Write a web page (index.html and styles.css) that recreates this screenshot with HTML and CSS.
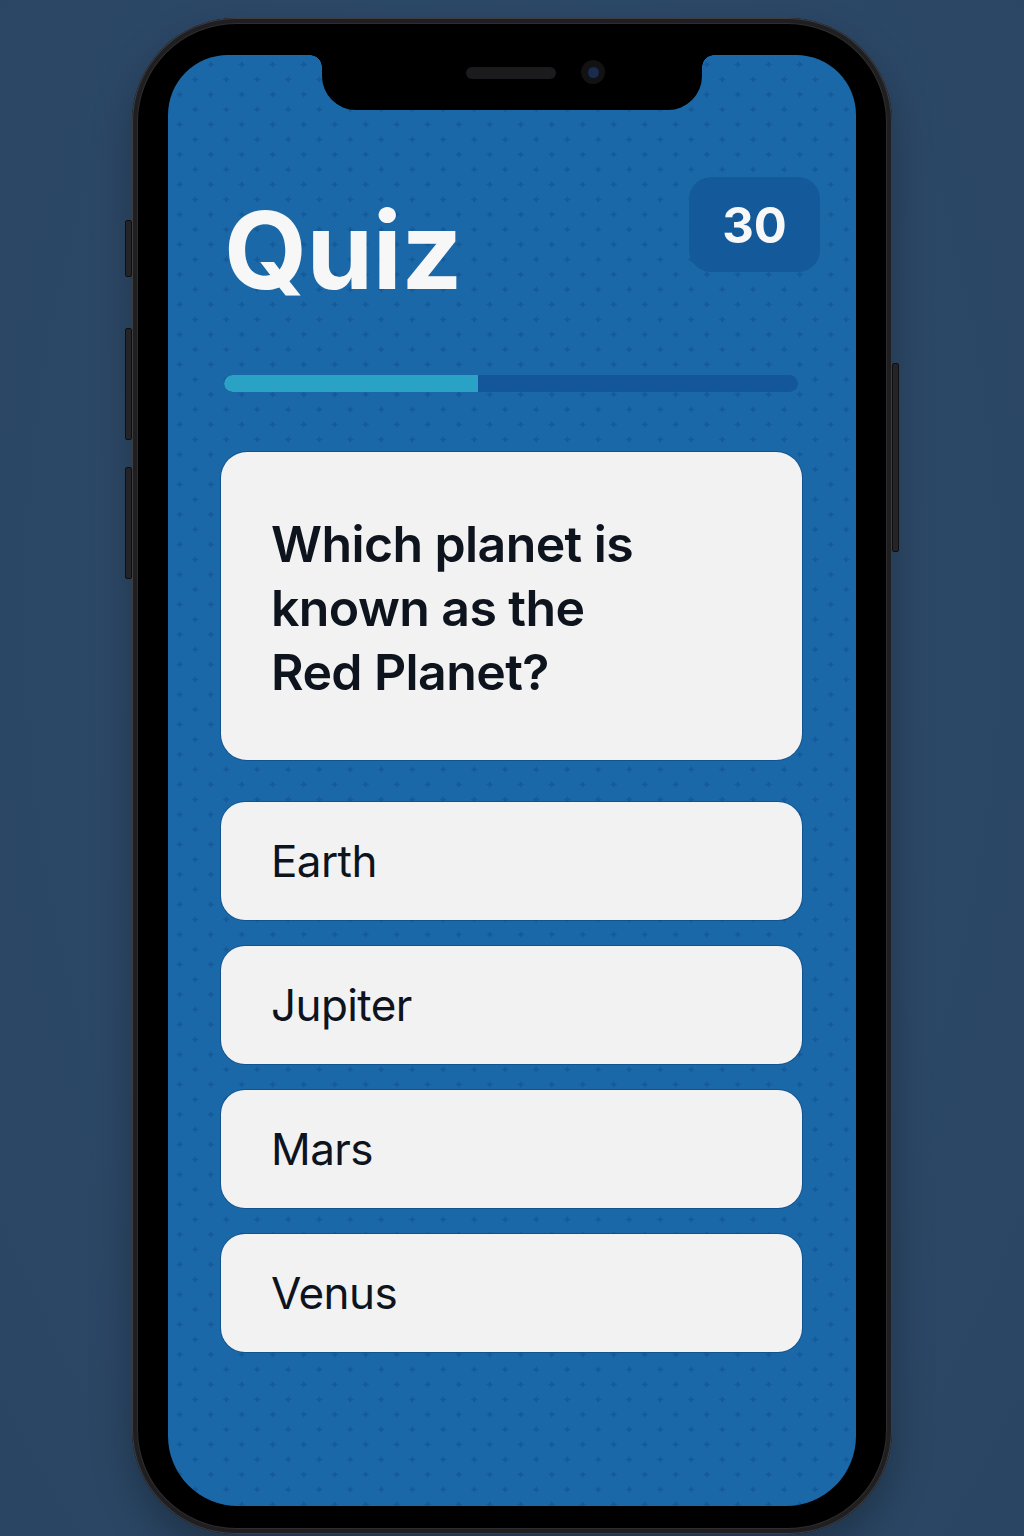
FILE: index.html
```html
<!DOCTYPE html>
<html lang="en">
<head>
<meta charset="utf-8">
<title>Quiz</title>
<link rel="stylesheet" href="styles.css">
</head>
<body>
<div class="stage">
  <div class="phone">
    <span class="btn btn-l1"></span>
    <span class="btn btn-l2"></span>
    <span class="btn btn-l3"></span>
    <span class="btn btn-r1"></span>
    <div class="screen">
      <div class="notch">
        <span class="speaker"></span>
        <span class="camera"></span>
      </div>
      <header class="head">
        <h1 class="title">Quiz</h1>
        <div class="timer">30</div>
      </header>
      <div class="progress"><div class="progress-fill" style="width:44.3%"></div></div>
      <section class="question">
        <p class="question-text">Which planet is<br>known as the<br>Red Planet?</p>
      </section>
      <ul class="answers">
        <li class="answer">Earth</li>
        <li class="answer">Jupiter</li>
        <li class="answer">Mars</li>
        <li class="answer">Venus</li>
      </ul>
    </div>
  </div>
</div>
</body>
</html>
```
FILE: styles.css
```css
* { box-sizing: border-box; }
html, body { margin: 0; padding: 0; }
body {
  width: 1024px;
  height: 1536px;
  overflow: hidden;
  background: radial-gradient(ellipse at 50% 40%, #304d6e 0%, #2c4867 60%, #2a4563 100%);
  font-family: Inter, "Noto Sans", "Liberation Sans", sans-serif;
}
.stage {
  display: flex;
  justify-content: center;
  padding-top: 18px;
}
.phone {
  position: relative;
  width: 760px;
  height: 1516px;
  border-radius: 104px;
  background: #000;
  padding: 37px 36px 28px 36px;
  display: flex;
  box-shadow:
    inset 0 0 0 1px #3d3d40,
    inset 0 0 0 5px #1f1f21,
    inset 0 0 0 6px #2e2e30,
    0 18px 40px rgba(0, 0, 0, 0.28);
}
.btn {
  position: absolute;
  width: 7px;
  background: #242426;
  border: 1px solid #0f0f10;
  border-radius: 2px;
}
.btn-l1 { left: -7px; top: 202px; height: 57px; }
.btn-l2 { left: -7px; top: 310px; height: 112px; }
.btn-l3 { left: -7px; top: 449px; height: 112px; }
.btn-r1 { right: -7px; top: 345px; height: 189px; }

.screen {
  position: relative;
  flex: 1;
  overflow: hidden;
  border-radius: 60px 60px 70px 70px;
  background-color: #1b68a8;
  background-image: url("data:image/svg+xml,%3Csvg xmlns='http://www.w3.org/2000/svg' width='31' height='30' viewBox='0 0 31 30'%3E%3Cg fill='%23145898' fill-opacity='0.85'%3E%3Cpath d='M7.75 3.4 Q8.4 6.85 11.85 7.5 Q8.4 8.15 7.75 11.6 Q7.1 8.15 3.65 7.5 Q7.1 6.85 7.75 3.4Z'/%3E%3Cpath d='M23.25 18.4 Q23.9 21.85 27.35 22.5 Q23.9 23.15 23.25 26.6 Q22.6 23.15 19.15 22.5 Q22.6 21.85 23.25 18.4Z'/%3E%3C/g%3E%3C/svg%3E");
  background-position: 4px 2px;
  padding: 0 54px 0 53px;
  display: flex;
  flex-direction: column;
}
.notch {
  position: absolute;
  left: 154px;
  top: 0;
  width: 380px;
  height: 55px;
  background: #000;
  border-radius: 0 0 34px 34px;
}
.notch::before,
.notch::after {
  content: "";
  position: absolute;
  top: 0;
  width: 12px;
  height: 12px;
}
.notch::before {
  left: -12px;
  background: radial-gradient(circle at 0 100%, transparent 11.5px, #000 12px);
}
.notch::after {
  right: -12px;
  background: radial-gradient(circle at 100% 100%, transparent 11.5px, #000 12px);
}
.speaker {
  position: absolute;
  left: 144px;
  top: 12px;
  width: 90px;
  height: 12px;
  border-radius: 6px;
  background: #1b1b1d;
}
.camera {
  position: absolute;
  left: 259px;
  top: 5px;
  width: 24px;
  height: 24px;
  border-radius: 50%;
  background: #121214;
  display: flex;
  align-items: center;
  justify-content: center;
}
.camera::after {
  content: "";
  width: 11px;
  height: 11px;
  border-radius: 50%;
  background: #1a2b4e;
}

.head {
  display: flex;
  justify-content: space-between;
  align-items: flex-start;
  padding-top: 122px;
  margin-right: -18px;
}
.title {
  margin: 18px 0 0 3px;
  font-size: 107px;
  line-height: 110px;
  font-weight: 700;
  color: #f7f7f7;
  letter-spacing: -0.5px;
}
.timer {
  width: 131px;
  height: 95px;
  border-radius: 22px;
  background: #14599a;
  color: #f7f7f7;
  font-size: 49px;
  font-weight: 700;
  display: flex;
  align-items: center;
  justify-content: center;
  padding-top: 2px;
}
.progress {
  margin: 70px 4px 0 3px;
  height: 17px;
  border-radius: 9px;
  background: #13579a;
  overflow: hidden;
}
.progress-fill {
  height: 100%;
  background: #2aa2c6;
  border-radius: 9px 0 0 9px;
}
.question {
  margin-top: 60px;
  height: 308px;
  border-radius: 26px;
  background: #f2f2f2;
  padding: 60px 50px 0 50px;
  box-shadow: 0 0 0 1px rgba(12, 70, 130, 0.6);
}
.question-text {
  margin: 0;
  font-size: 50px;
  line-height: 64px;
  font-weight: 600;
  color: #0e141d;
  letter-spacing: -0.6px;
}
.answers {
  list-style: none;
  margin: 42px 0 0 0;
  padding: 0;
  display: flex;
  flex-direction: column;
  gap: 26px;
}
.answer {
  height: 118px;
  border-radius: 24px;
  background: #f2f2f2;
  display: flex;
  align-items: center;
  padding-left: 50px;
  font-size: 44px;
  font-weight: 400;
  color: #0e141d;
  letter-spacing: -0.6px;
  box-shadow: 0 0 0 1px rgba(12, 70, 130, 0.6);
}
```
